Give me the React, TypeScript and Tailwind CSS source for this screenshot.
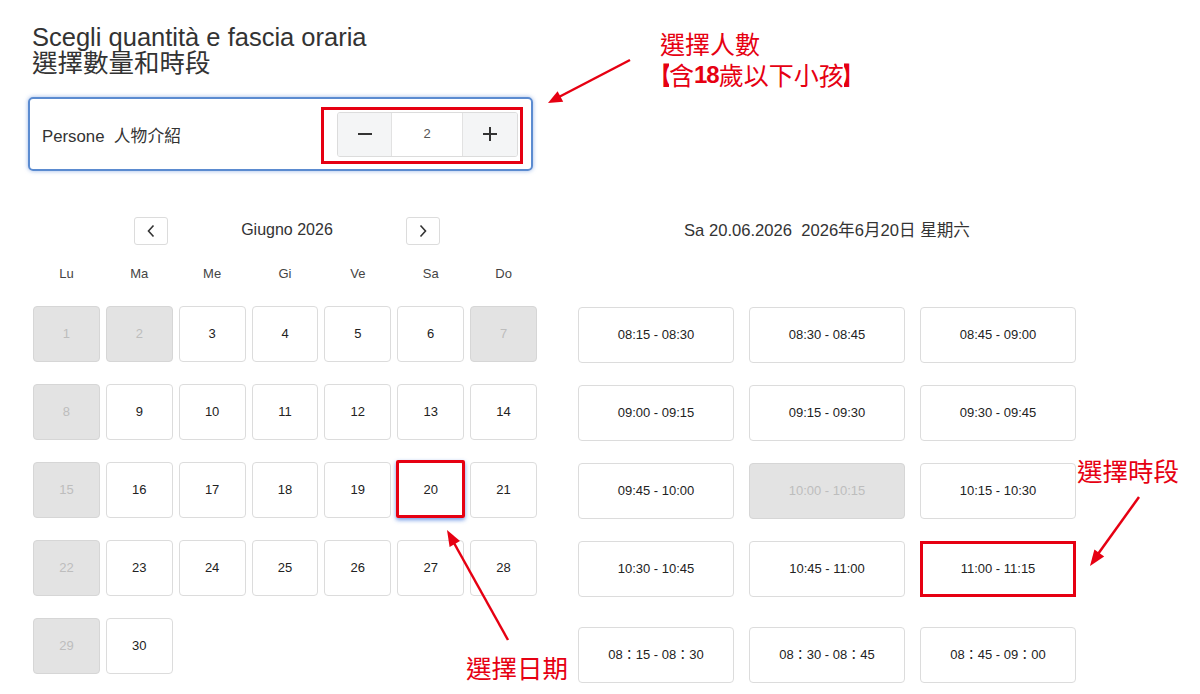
import React from "react";

const FONT = { fontFamily: '"Liberation Sans", Arial, "Noto Sans CJK TC", sans-serif' };
const CJK = { fontFamily: '"Liberation Sans", Arial, "Noto Sans CJK TC", sans-serif' };
const RED_FONT = { fontFamily: '"Noto Sans CJK TC", sans-serif' };

type Day = { n: number; off?: boolean; sel?: boolean };

const days: (Day | null)[] = [
  { n: 1, off: true }, { n: 2, off: true }, { n: 3 }, { n: 4 }, { n: 5 }, { n: 6 }, { n: 7, off: true },
  { n: 8, off: true }, { n: 9 }, { n: 10 }, { n: 11 }, { n: 12 }, { n: 13 }, { n: 14 },
  { n: 15, off: true }, { n: 16 }, { n: 17 }, { n: 18 }, { n: 19 }, { n: 20, sel: true }, { n: 21 },
  { n: 22, off: true }, { n: 23 }, { n: 24 }, { n: 25 }, { n: 26 }, { n: 27 }, { n: 28 },
  { n: 29, off: true }, { n: 30 },
];

const slots = [
  { t: "08:15 - 08:30" }, { t: "08:30 - 08:45" }, { t: "08:45 - 09:00" },
  { t: "09:00 - 09:15" }, { t: "09:15 - 09:30" }, { t: "09:30 - 09:45" },
  { t: "09:45 - 10:00" }, { t: "10:00 - 10:15", off: true }, { t: "10:15 - 10:30" },
  { t: "10:30 - 10:45" }, { t: "10:45 - 11:00" }, { t: "11:00 - 11:15", sel: true },
];

const extra = ["08：15 - 08：30", "08：30 - 08：45", "08：45 - 09：00"];

const weekdays = ["Lu", "Ma", "Me", "Gi", "Ve", "Sa", "Do"];

export default function App() {
  return (
    <div className="relative w-[1200px] h-[694px] overflow-hidden bg-white text-[#333]" style={FONT}>
      {/* Title */}
      <div className="ml-[32px] pt-[24px] text-[25.5px] leading-[26px] text-[#333]" style={CJK}>
        <div>Scegli quantità e fascia oraria</div>
        <div>選擇數量和時段</div>
      </div>

      {/* Persone box */}
      <div className="ml-[28px] mt-[21px] w-[505px] h-[74px] rounded-[5px] border-2 border-[#5b8bd0] shadow-[0_0_4px_rgba(70,120,210,0.55)] flex items-center justify-between pl-[12px] pr-[13px]">
        <div className="text-[16.8px] text-[#333] whitespace-pre pt-[6px]" style={CJK}>Persone  人物介紹</div>
        <div className="relative">
          <div className="flex w-[181px] h-[45px] rounded-[3px] border border-[#dcdcdc] overflow-hidden">
            <div className="w-[54px] bg-[#f4f5f6] border-r border-[#e2e2e2] flex items-center justify-center">
              <div className="w-[14px] h-[2px] bg-[#333]" />
            </div>
            <div className="flex-1 bg-white flex items-center justify-center text-[13px] text-[#555]">2</div>
            <div className="w-[55px] bg-[#f4f5f6] border-l border-[#e2e2e2] flex items-center justify-center">
              <svg width="16" height="16" viewBox="0 0 16 16">
                <path d="M8 1v14M1 8h14" stroke="#333" strokeWidth="2" />
              </svg>
            </div>
          </div>
          <div className="absolute -left-[16px] -right-[5px] -top-[5px] -bottom-[7px] border-[3px] border-[#e60012]" />
        </div>
      </div>

      {/* Calendar + slots */}
      <div className="ml-[33px] mt-[46px] flex gap-[41px]">
        {/* Calendar */}
        <div className="w-[504px]">
          <div className="flex items-center justify-center h-[28px] pl-[4px]">
            <div className="w-[34px] h-[28px] rounded-[3px] border border-[#dcdcdc] flex items-center justify-center">
              <svg width="10" height="14" viewBox="0 0 10 14">
                <path d="M7.5 1.5L2.5 7l5 5.5" fill="none" stroke="#333" strokeWidth="1.6" />
              </svg>
            </div>
            <div className="w-[238px] text-center text-[16px] text-[#333] -mt-[2px]">Giugno 2026</div>
            <div className="w-[34px] h-[28px] rounded-[3px] border border-[#dcdcdc] flex items-center justify-center">
              <svg width="10" height="14" viewBox="0 0 10 14">
                <path d="M2.5 1.5L7.5 7l-5 5.5" fill="none" stroke="#333" strokeWidth="1.6" />
              </svg>
            </div>
          </div>
          <div className="grid grid-cols-7 gap-x-[6px] mt-[20px] h-[18px]">
            {weekdays.map((w) => (
              <div key={w} className="text-center text-[13px] leading-[18px] text-[#444]">{w}</div>
            ))}
          </div>
          <div className="grid grid-cols-7 gap-x-[6px] gap-y-[22px] mt-[23px]">
            {days.map((d, i) =>
              d ? (
                <div
                  key={i}
                  className={
                    d.off
                      ? "relative h-[56px] rounded-[4px] border border-[#d6d6d6] bg-[#e3e3e3] flex items-center justify-center text-[13px] text-[#bdbdbd]"
                      : "relative h-[56px] rounded-[4px] border border-[#dcdcdc] bg-white flex items-center justify-center text-[13px] text-[#222]"
                  }
                >
                  {d.n}
                  {d.sel && (
                    <div className="absolute -top-[3px] -left-[2px] -right-[2px] -bottom-[1px] border-[3px] border-[#e60012] rounded-[2px] shadow-[0_2px_4px_rgba(50,110,220,0.7)]" />
                  )}
                </div>
              ) : (
                <div key={i} />
              )
            )}
          </div>
        </div>

        {/* Slots */}
        <div className="w-[498px]">
          <div className="h-[28px] flex items-center justify-center text-[16.6px] text-[#333] whitespace-pre" style={CJK}>
            Sa 20.06.2026  2026年6月20日 星期六
          </div>
          <div className="grid grid-cols-3 gap-x-[15px] gap-y-[22px] mt-[62px]">
            {slots.map((s) => (
              <div
                key={s.t}
                className={
                  s.sel
                    ? "h-[56px] border-[3px] border-[#e60012] bg-white flex items-center justify-center text-[13px] text-[#222]"
                    : s.off
                    ? "h-[56px] rounded-[4px] border border-[#d6d6d6] bg-[#e3e3e3] flex items-center justify-center text-[13px] text-[#bdbdbd]"
                    : "h-[56px] rounded-[4px] border border-[#dcdcdc] bg-white flex items-center justify-center text-[13px] text-[#222]"
                }
              >
                {s.t}
              </div>
            ))}
          </div>
          <div className="grid grid-cols-3 gap-x-[15px] mt-[30px]">
            {extra.map((t) => (
              <div key={t} className="h-[56px] rounded-[4px] border border-[#dcdcdc] bg-white flex items-center justify-center text-[13px] text-[#222]" style={CJK}>
                {t}
              </div>
            ))}
          </div>
        </div>
      </div>

      {/* Annotations */}
      <div className="absolute left-[660px] top-[28px] text-[25px] leading-[31px] text-[#e60012] whitespace-nowrap" style={RED_FONT}>
        <div>選擇人數</div>
        <div className="flex items-center h-[31px]">
          <span className="inline-block w-[9px] h-[31px] overflow-hidden font-bold">
            <span className="inline-block -ml-[13px]">【</span>
          </span>
          <span>含</span>
          <span className="font-bold text-[24px] tracking-[-1px]" style={{ fontFamily: '"Liberation Sans Narrow", "Liberation Sans", Arial, sans-serif' }}>18</span>
          <span>歲以下小孩</span>
          <span className="inline-block w-[9px] h-[31px] overflow-hidden font-bold">
            <span className="inline-block -ml-[3px]">】</span>
          </span>
        </div>
      </div>
      <div className="absolute left-[1077px] top-[454px] text-[25.5px] leading-[31px] text-[#e60012] whitespace-nowrap" style={RED_FONT}>
        選擇時段
      </div>
      <div className="absolute left-[466px] top-[651px] text-[25.5px] leading-[31px] text-[#e60012] whitespace-nowrap" style={RED_FONT}>
        選擇日期
      </div>

      <svg className="absolute left-0 top-0 pointer-events-none" width="1200" height="694" viewBox="0 0 1200 694">
        <g stroke="#e60012" strokeWidth="2.5" fill="#e60012">
          <line x1="630" y1="60" x2="557" y2="98" />
          <polygon points="548,103 563.2,101.8 557.6,91.2" stroke="none" />
          <line x1="508" y1="640" x2="454" y2="543" />
          <polygon points="447,530 460,541.1 449.6,546.9" stroke="none" />
          <line x1="1139" y1="497" x2="1098" y2="554" />
          <polygon points="1090,566 1104.2,556.4 1094.4,549.4" stroke="none" />
        </g>
      </svg>
    </div>
  );
}
